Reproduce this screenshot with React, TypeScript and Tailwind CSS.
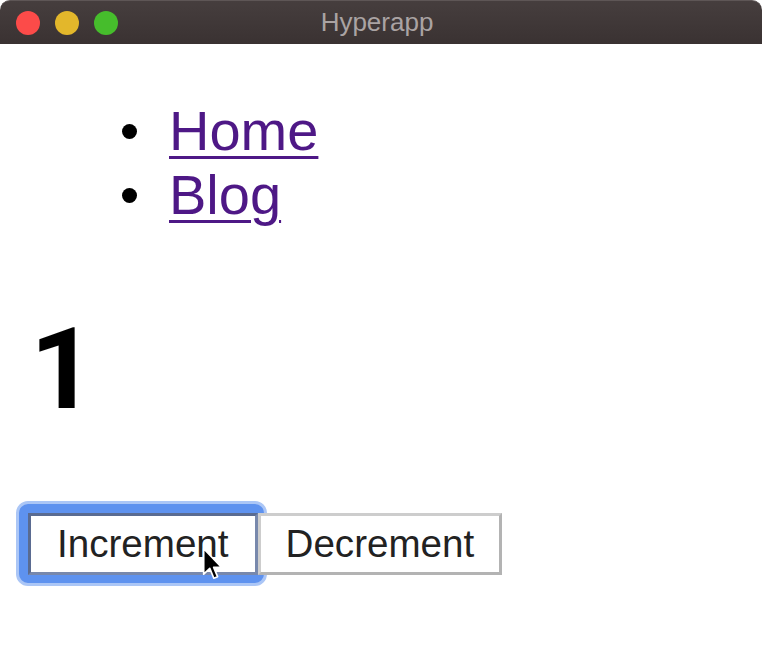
import React from "react";

const FONT = "font-['Liberation_Sans','Arial',sans-serif]";

function TitleBar() {
  return (
    <div className="relative flex h-[44px] items-center rounded-t-[10px] border-t border-[#5e5656] bg-gradient-to-b from-[#463e3e] to-[#3a3232]">
      <div className="flex items-center gap-[15px] pl-[16px]">
        <span className="h-[24px] w-[24px] rounded-full bg-[#fc4b49]" />
        <span className="h-[24px] w-[24px] rounded-full bg-[#e3b72b]" />
        <span className="h-[24px] w-[24px] rounded-full bg-[#46bd2c]" />
      </div>
      <div className="flex-1 pr-[126px] text-center text-[26px] text-[#aaa3a3]">Hyperapp</div>
    </div>
  );
}

function Cursor() {
  return (
    <svg
      className="pointer-events-none absolute left-[202px] top-[547px]"
      width="22"
      height="34"
      viewBox="0 0 13 20"
    >
      <path
        d="M1 1 L1 16 L4.6 12.6 L7 18.4 L9.2 17.5 L6.9 12 L11.6 12 Z"
        fill="#000"
        stroke="#fff"
        strokeWidth="1"
        strokeLinejoin="round"
      />
    </svg>
  );
}

export default function App() {
  const links = ["Home", "Blog"];
  const [count] = React.useState(1);

  return (
    <div className={`relative h-[646px] w-[762px] overflow-hidden bg-white ${FONT}`}>
      <TitleBar />

      {/* Nav */}
      <ul className="mt-[55px] pl-[122px]">
        {links.map((l) => (
          <li key={l} className="flex h-[64px] items-center">
            <span className="h-[15px] w-[15px] shrink-0 rounded-full bg-black" />
            <a
              href="#"
              className="ml-[32px] text-[56px] leading-[64px] text-[#4e1886] underline decoration-[3px] underline-offset-[6px]"
            >
              {l}
            </a>
          </li>
        ))}
      </ul>

      {/* Counter */}
      <h1 className="mt-[86px] pl-[30px] font-['Roboto',sans-serif] text-[114px] font-bold leading-[112px] text-black">
        {count}
      </h1>

      {/* Buttons */}
      <div className="isolate mt-[88px] flex pl-[28px]">
        <button className="relative h-[62px] border-[3px] border-b-[#7888ac] border-l-[#5a6b91] border-r-[#7888ac] border-t-[#5a6b91] bg-white px-[26px] text-[38.6px] leading-none text-[#222] before:absolute before:-bottom-[14px] before:-left-[15px] before:-right-[12px] before:-top-[15px] before:-z-10 before:rounded-[12px] before:border-[3px] before:border-[#abc6f6] before:bg-[#5e92ef] before:content-['']">
          Increment
        </button>
        <button className="h-[62px] border-[3px] border-b-[#b3b3b3] border-l-[#cdcdcd] border-r-[#b3b3b3] border-t-[#cdcdcd] bg-white px-[25px] text-[38.6px] leading-none text-[#222]">
          Decrement
        </button>
      </div>

      <Cursor />
    </div>
  );
}
